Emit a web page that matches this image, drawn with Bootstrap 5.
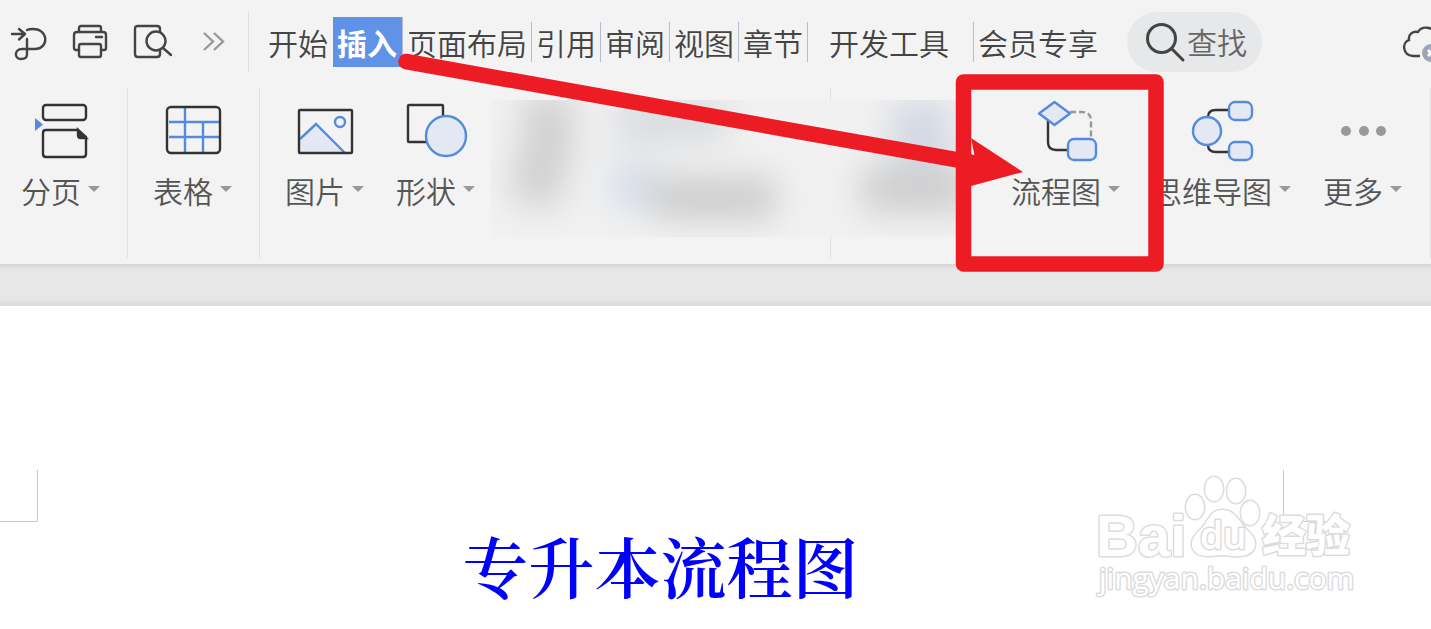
<!DOCTYPE html>
<html lang="zh-CN">
<head>
<meta charset="utf-8">
<meta name="viewport" content="width=device-width, initial-scale=1">
<title>专升本流程图</title>
<link href="https://cdn.jsdelivr.net/npm/bootstrap@5.3.0/dist/css/bootstrap.min.css" rel="stylesheet">
<style>
  body { font-family: "Noto Sans CJK SC", sans-serif; background: #fff; overflow-x: hidden; }
  svg { display: block; flex-shrink: 0; overflow: visible; }
  .topbar { background: #f3f3f3; height: 84px; padding-left: 10px; }
  .quick { gap: 24px; width: 239px; height: 60px; border-right: 1px solid #dedede; }
  .quick button, .cloud { border: 0; background: none; padding: 0; }
  .quick button:last-child { margin-left: 6px; }
  .tabs { padding-left: 15px; font-size: 30px; line-height: 40px; }
  .tabs a { color: #444; text-decoration: none; white-space: nowrap; padding: 0 4px; border-right: 1px solid #b5bccf; font-weight: 350; }
  .tabs a.plain { border-color: transparent; }
  .tabs a.active { background: #6092e8; color: #fff; font-weight: 700; line-height: 50px; height: 50px; padding-right: 5px; }
  .tabs a.wide { padding: 0 24px 0 21px; }
  .finder { width: 135px; height: 60px; margin-left: 24px; padding-left: 19px; background: #e6e8ea; gap: 2px; }
  .finder input { width: 66px; border: 0; padding: 0 0 2px; background: none; font-size: 30px; line-height: 40px; font-weight: 350; color: #555; outline: 0; }
  .finder input::placeholder { color: #666; opacity: 1; }
  .cloud { margin-right: -12px; }
  .ribbon { background: #f3f3f3; height: 180px; padding-top: 4px; }
  .group { height: 170px; padding-top: 13px; border-right: 1px solid #e1e1e1; }
  .tool { border: 0; background: none; padding: 0; color: #555; font-size: 30px; line-height: 40px; font-weight: 350; }
  .tool > svg { margin: 0 auto 9px; stroke-width: 2.4px; }
  .tool .name { gap: 7px; white-space: nowrap; }
  .tool .name::after { content: ""; border: 6px solid transparent; border-top-color: #999; border-bottom: 0; margin-bottom: 3px; }
  .hidden-tools { width: 472px; height: 170px; margin: -13px 48px 0 16px; padding-top: 12px; background: linear-gradient(#e1e1e1, #e1e1e1) 339px 0 / 1px 100% no-repeat; }
  .haze { height: 137px; background: #eee; overflow: hidden; }
  .desk { height: 42px; background: linear-gradient(#d6d6d6, #e7e7e7 6px, #e7e7e7 35px, #d9d9d9 41px, #e2e2e2); }
  .sheet { padding-top: 164px; }
  .crop-l { width: 38px; height: 52px; border: solid #c8c8c8; border-width: 0 1px 1px 0; }
  .crop-area { width: 148px; }
  .crop-r { width: 43px; height: 52px; border: solid #c8c8c8; border-width: 0 0 1px 1px; }
  .sheet h1 { color: #00f; font-family: "Noto Serif CJK SC", "Noto Sans CJK SC", serif; font-size: 66px; line-height: 80px; font-weight: 600; padding-top: 55px; margin: 0; }
  .note { left: 0; top: 0; pointer-events: none; }
  .seal { right: 71px; top: 158px; }
</style>
</head>
<body>
<div class="position-relative">
<header class="topbar d-flex align-items-center">
  <div class="quick d-flex align-items-center flex-shrink-0">
    <button type="button" aria-label="输出为PDF"><svg width="38" height="40" fill="none" stroke="#444" stroke-width="2.400" stroke-linecap="round" stroke-linejoin="round"><path d="M2 12H15M9 7l6 5-6 5.500M17 8q2-1 6-1c16 0 16 20 2 20H12c-8 0-8 10-1 10 4 0 6-1 6-5V17"/></svg></button>
    <button type="button" aria-label="打印"><svg width="38" height="40" fill="none" stroke="#444" stroke-width="2.400" stroke-linejoin="round" stroke-linecap="round"><path d="M7 10V6q0-2 2-2h18q2 0 2 2v4M7 28H4q-2 0-2-2V13q0-3 3-3h26q3 0 3 3v13q0 2-2 2h-3M24 15h6"/><rect x="7" y="22" width="22" height="13" rx="2"/></svg></button>
    <button type="button" aria-label="打印预览"><svg width="38" height="40" fill="none" stroke="#444" stroke-width="2.400" stroke-linejoin="round" stroke-linecap="round"><path d="M26 10V7q0-3-3-3H4Q1 4 1 7v25q0 3 3 3h19q3 0 3-3v-4M29 26l8 7"/><circle cx="22" cy="19" r="9.500"/></svg></button>
    <button type="button" aria-label="更多命令"><svg width="24" height="40" fill="none" stroke="#999" stroke-width="2.400"><path d="M2 11l9 8.500-9 8.500M12 11l9 8.500-9 8.500"/></svg></button>
  </div>
  <nav class="tabs d-flex align-items-center" aria-label="功能区">
    <a href="#" class="plain">开始</a><a href="#" class="active">插入</a><a href="#">页面布局</a><a href="#">引用</a><a href="#">审阅</a><a href="#">视图</a><a href="#">章节</a><a href="#" class="wide">开发工具</a><a href="#" class="plain">会员专享</a>
  </nav>
  <label class="finder d-flex align-items-center rounded-pill flex-shrink-0">
    <svg width="39" height="40" fill="none" stroke="#444" stroke-width="3" stroke-linecap="round"><circle cx="15.500" cy="16.500" r="14"/><path d="M26 27l11 11"/></svg>
    <input type="text" placeholder="查找" aria-label="查找">
  </label>
  <button type="button" class="cloud ms-auto" aria-label="云同步"><svg width="40" height="40" fill="none"><path d="M17 34H10C-1 33-1 20 6 18c-1-6 4-9 9-8 4-7 15-5 18 2 6 2 8 8 5 12" stroke="#444" stroke-width="2.400"/><circle cx="28" cy="31" r="9" fill="#9da5b8"/><path d="M25 28l6 6m0-6l-6 6" stroke="#fff" stroke-width="3"/></svg></button>
</header>

<section class="ribbon d-flex" aria-label="插入">
  <div class="group d-flex align-items-start" style="padding-left:21px;padding-right:27px">
    <button type="button" class="tool"><svg width="60" height="60" fill="none" stroke="#333"><rect x="12" y="4" width="43" height="15" rx="3"/><path d="M47 29H15q-3 0-3 3v21q0 3 3 3h37q3 0 3-3V36z"/><path d="M47 29v5q0 3 3 3h5z" fill="#333"/><path d="M4 17v13l8-6.500z" fill="#558bdc" stroke="none"/></svg><span class="name d-flex align-items-center">分页</span></button>
  </div>
  <div class="group d-flex align-items-start" style="padding-left:25px;padding-right:27px">
    <button type="button" class="tool"><svg width="60" height="60" fill="none" stroke="#558bdc"><path d="M6 21h51M6 36h51M22 7v44M40 21v30"/><rect x="4" y="6" width="53" height="46" rx="4" stroke="#333"/></svg><span class="name d-flex align-items-center">表格</span></button>
  </div>
  <div class="d-flex align-items-start group flex-grow-1" style="padding-left:25px">
    <button type="button" class="tool"><svg width="60" height="60" fill="none" stroke="#558bdc"><path d="M5 38l16-15 29 29H5z" fill="#e3e8f2" stroke="none"/><path d="M5 38l16-15 29 29"/><circle cx="45" cy="21" r="5"/><rect x="4" y="9" width="53" height="43" rx="1" stroke="#333"/></svg><span class="name d-flex align-items-center">图片</span></button>
    <button type="button" class="tool" style="margin-left:32px"><svg width="60" height="60" fill="none"><rect x="2" y="4" width="35" height="37" rx="1" stroke="#333"/><circle cx="40" cy="35" r="20" fill="#e3e8f2" stroke="#558bdc"/></svg><span class="name d-flex align-items-center">形状</span></button>
    <div class="hidden-tools flex-shrink-0">
      <div class="haze"><svg width="472" height="137" aria-hidden="true"><defs><filter id="soft" x="-50%" y="-50%" width="200%" height="200%"><feGaussianBlur stdDeviation="17"/></filter></defs><rect width="472" height="137" fill="#f1f1f1"/><g filter="url(#soft)"><rect x="32" y="-5" width="50" height="70" fill="#d0d0d0"/><rect x="22" y="55" width="50" height="50" fill="#d0d0d0"/><rect x="125" y="0" width="110" height="42" fill="#d8dade"/><rect x="120" y="60" width="45" height="50" fill="#d8deea"/><rect x="160" y="78" width="125" height="40" fill="#cbcbcb"/><rect x="400" y="0" width="60" height="65" fill="#d3d8e3"/><rect x="370" y="67" width="110" height="45" fill="#cdcdcd"/></g></svg></div>
    </div>
    <button type="button" class="tool"><svg width="60" height="60" fill="none" stroke="#558bdc"><path d="M34 11h12q9 0 9 9v18" stroke="#999" stroke-dasharray="6 3"/><path d="M12 19v22q0 8 8 8h13" stroke="#333"/><path d="M3 12.500L18.500 1 34 12.500 18.500 24z" fill="#e3e8f2" stroke-linejoin="round"/><rect x="32" y="38" width="28" height="21" rx="6" fill="#e3e8f2"/></svg><span class="name d-flex align-items-center">流程图</span></button>
    <button type="button" class="tool" style="margin-left:32px"><svg width="60" height="60" fill="none" stroke="#558bdc"><path d="M16 16q0-7 8-7h13M16 44q0 7 8 7h13" stroke="#333"/><g fill="#e3e8f2"><circle cx="15" cy="30" r="14"/><rect x="37" y="1" width="23" height="18" rx="6"/><rect x="37" y="41" width="23" height="18" rx="6"/></g></svg><span class="name d-flex align-items-center">思维导图</span></button>
    <button type="button" class="tool" style="margin-left:32px"><svg width="60" height="60" fill="#999"><circle cx="13" cy="30" r="5"/><circle cx="31" cy="30" r="5"/><circle cx="48" cy="30" r="5"/></svg><span class="name d-flex align-items-center">更多</span></button>
  </div>
</section>
<div class="desk"></div>

<main class="sheet d-flex position-relative">
  <div class="crop-l flex-shrink-0"></div>
  <h1 class="flex-grow-1 text-center">专升本流程图</h1>
  <div class="crop-area flex-shrink-0"><div class="crop-r"></div></div>
  <svg class="seal position-absolute" width="270" height="140" viewBox="1090 464 270 140" fill="#fff" stroke="#dcdcdc" stroke-width="2" stroke-linejoin="round" paint-order="stroke">
    <text x="1096" y="556" font-family="Liberation Sans, sans-serif" font-weight="700" font-size="58" stroke-width="3">Bai</text>
    <g stroke-width="3"><ellipse cx="1195" cy="507" rx="9" ry="12"/><ellipse cx="1214" cy="489" rx="9" ry="12"/><ellipse cx="1236" cy="491" rx="9" ry="12"/><ellipse cx="1250" cy="513" rx="9" ry="12"/><path d="M1222 510c-13 0-13 13-24 22-12 12-5 24 9 24 7 0 10-1 16-1s9 2 17 1c17-1 19-15 9-24-10-9-13-22-27-22z"/></g>
    <text x="1200" y="549" font-family="Open Sans, sans-serif" font-size="37" font-weight="600" stroke-width="3">du</text>
    <text x="1262" y="552" font-family="Noto Sans CJK SC, sans-serif" font-weight="900" font-size="44" stroke-width="3">经验</text>
    <text x="1099" y="589" font-family="Open Sans, sans-serif" font-size="30" stroke-width="3">jingyan.baidu.com</text>
  </svg>
</main>

<svg class="note position-absolute" width="1180" height="290" aria-hidden="true" fill="none" stroke="#ed1c24" stroke-width="15.500" stroke-linejoin="round"><rect x="963.500" y="82" width="192.500" height="182"/><path d="M406 61.500L975 163" stroke-linecap="round"/><path d="M971 138l52 34-52 14v-28h4z" fill="#ed1c24" stroke="none"/></svg>
</div>
<script src="https://cdn.jsdelivr.net/npm/bootstrap@5.3.0/dist/js/bootstrap.bundle.min.js"></script>
</body>
</html>
